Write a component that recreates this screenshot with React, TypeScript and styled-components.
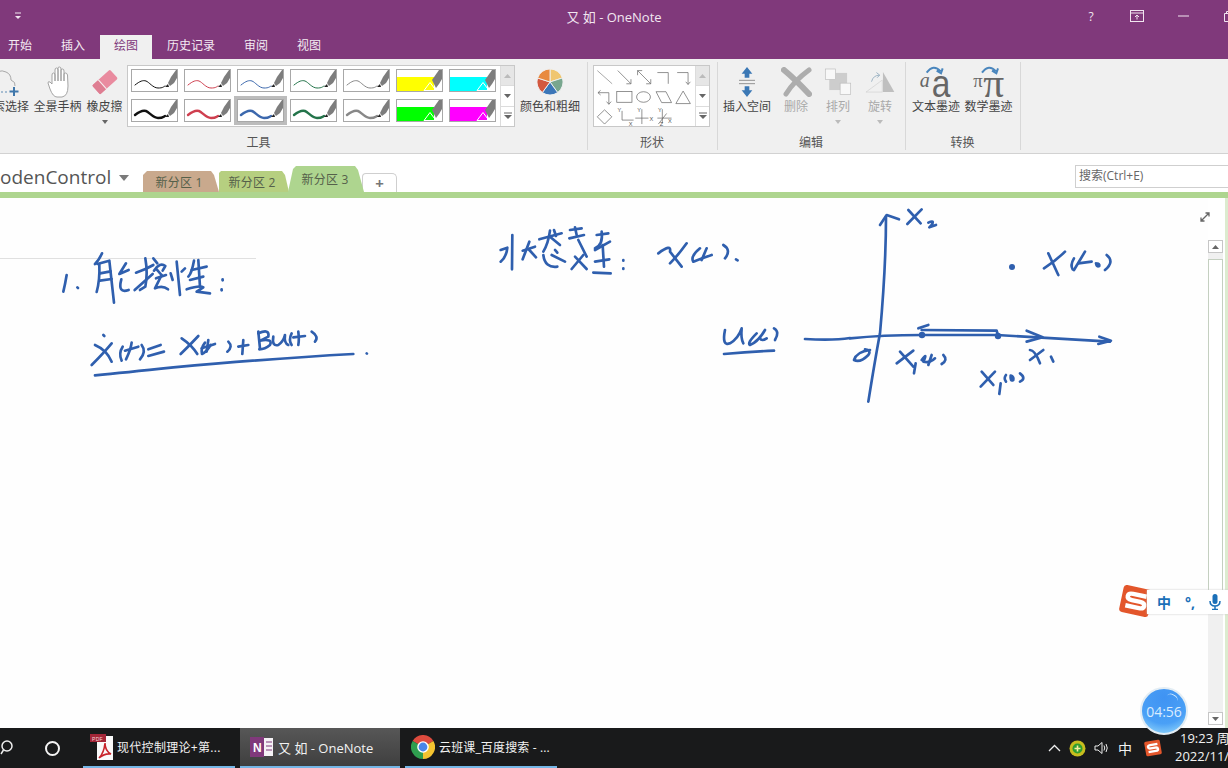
import React from "react";
import styled, { createGlobalStyle } from "styled-components";

const UI = `"Open Sans", "Noto Sans CJK SC", sans-serif`;
const INK = "#2f5fae";

const Global = createGlobalStyle`
  html, body { margin: 0; padding: 0; background: #fff; }
  body { font-family: ${UI}; overflow: hidden; }
  * { box-sizing: border-box; }
`;

const Screen = styled.div`
  position: relative; width: 1228px; height: 768px; overflow: hidden;
  display: flex; flex-direction: column; background: #fff;
`;
const TitleBar = styled.div`
  height: 35px; flex: none; background: #80397b; color: #f1e6f0;
  display: grid; grid-template-columns: 1fr auto 1fr; align-items: center; font-size: 13px;
  padding-bottom: 3px;
`;
const QuickAccess = styled.div`padding-left: 14px; display: flex;`;
const TitleText = styled.div`white-space: pre;`;
const WindowControls = styled.div`display: flex; justify-content: flex-end; margin-right: -24px; height: 100%; align-items: center;`;
const WindowButton = styled.div`width: 46px; display: flex; justify-content: center; align-items: center; font-size: 12px; flex: none;`;

const TabRow = styled.div`height: 24px; flex: none; background: #80397b; display: flex; gap: 1px; margin-left: -6px;`;
const RibbonTab = styled.div<{ $active?: boolean }>`
  padding: 0 14px; font-size: 12px; line-height: 21px; white-space: nowrap;
  color: ${p => (p.$active ? "#80397b" : "#f4ecf3")};
  background: ${p => (p.$active ? "#f0f0f0" : "transparent")};
`;

const Ribbon = styled.div`
  height: 95px; flex: none; background: #f0f0f0; border-bottom: 1px solid #d2d2d2;
  display: flex; margin-left: -69px; align-items: flex-start;
`;
const Group = styled.div<{ $w: number; $pl: number }>`
  width: ${p => p.$w}px; height: 88px; margin-top: 3px; padding-left: ${p => p.$pl}px;
  border-right: 1px solid #d8d8d8; display: flex; flex-direction: column; flex: none;
`;
const GroupBody = styled.div`height: 73px; padding-top: 3px; display: flex; align-items: flex-start;`;
const GroupLabel = styled.div`
  height: 15px; margin-left: -1px; font-size: 12px; line-height: 15px; color: #555; text-align: center;
`;
const GroupLabelWrap = styled.div<{ $pl: number }>`margin-left: ${p => -p.$pl}px;`;
const ToolButton = styled.div<{ $w: number; $off?: boolean }>`
  width: ${p => p.$w}px; flex: none; display: flex; flex-direction: column; align-items: center;
  color: ${p => (p.$off ? "#a9a9a9" : "#444")};
`;
const IconSlot = styled.div`height: 34px; display: flex; align-items: center; justify-content: center; width: 100%;`;
const ToolText = styled.div`font-size: 12px; line-height: 16px; white-space: nowrap;`;
const Caret = styled.div<{ $off?: boolean }>`
  width: 0; height: 0; margin-top: 5px; border: 3px solid transparent; border-bottom: 0;
  border-top: 4px solid ${p => (p.$off ? "#bbb" : "#666")};
`;

const Gallery = styled.div<{ $w: number; $ml?: number }>`
  width: ${p => p.$w}px; height: 62px; flex: none; background: #fff; border: 1px solid #c8c8c8;
  margin-left: ${p => p.$ml ?? 0}px;
  display: flex; justify-content: space-between; overflow: hidden;
`;
const SwatchGrid = styled.div`display: grid; grid-template-columns: repeat(7, 47px); grid-auto-rows: 23px; column-gap: 6px; row-gap: 7px; padding: 3px;`;
const Swatch = styled.div<{ $sel?: boolean }>`
  width: 47px; height: 23px; border: 1px solid #a8a8a8; background: #fff; line-height: 0;
  box-shadow: ${p => (p.$sel ? "0 0 0 3px #bcbcbc" : "none")};
`;
const ScrollStack = styled.div`width: 14px; flex: none; display: flex; flex-direction: column; border-left: 1px solid #dcdcdc;`;
const ScrollCell = styled.div<{ $off?: boolean }>`
  flex: 1; display: flex; align-items: center; justify-content: center; line-height: 0;
  background: ${p => (p.$off ? "#e6e6e6" : "#fff")}; border-bottom: 1px solid #dcdcdc;
  &:last-child { border-bottom: 0; }
`;

const SectionBar = styled.div`height: 38px; flex: none; background: #fff; display: flex; align-items: flex-end; position: relative;`;
const NotebookName = styled.div`width: 143px; height: 38px; flex: none; display: flex; align-items: center; font-size: 19px; color: #555; white-space: nowrap; padding-top: 8px;`;
const NotebookCaret = styled.span`width: 0; height: 0; margin-left: 8px; margin-top: 2px; border: 5px solid transparent; border-bottom: 0; border-top: 6px solid #7a7a7a;`;
const SectionTab = styled.div<{ $c: string; $w: number; $h: number; $ml: number; $pr: number; $clip: string }>`
  width: ${p => p.$w}px; height: ${p => p.$h}px; margin-left: ${p => p.$ml}px; padding-right: ${p => p.$pr}px; background: ${p => p.$c};
  clip-path: ${p => p.$clip}; flex: none; font-size: 12px; letter-spacing: 0.2px; color: #55604a; display: flex; align-items: center; justify-content: center;
`;
const AddTab = styled.div`
  width: 35px; height: 19px; margin-left: -2px; flex: none; border: 1px solid #cfcfcf; border-bottom: 0;
  border-radius: 4px 5px 0 0; color: #777; font-size: 15px; font-weight: 700; display: flex; align-items: center; justify-content: center; line-height: 1;
`;
const SearchBox = styled.div`
  position: absolute; left: 1075px; top: 11px; width: 170px; height: 23px; border: 1px solid #cfcfcf;
  font-size: 12px; color: #666; padding-left: 3px; line-height: 20px;
`;
const GreenRule = styled.div`height: 6px; flex: none; background: #aed58f;`;

const Workspace = styled.div`flex: 1; min-height: 0; display: flex;`;
const Canvas = styled.div`position: relative; width: 1208px; flex: none; background: #fefefe;`;
const TitleRule = styled.div`width: 256px; margin-top: 60px; border-top: 1px solid #e0e0e0;`;
const InkLayer = styled.svg`position: absolute; left: 0; top: 0;`;
const ExpandIcon = styled.div`position: absolute; left: 1199px; top: 13px; line-height: 0;`;
const ScrollColumn = styled.div`width: 15px; flex: none; margin-top: 42px; margin-bottom: 3px; display: flex; flex-direction: column; background: #f0f0f0;`;
const ScrollButton = styled.div`height: 13px; flex: none; background: #fff; border: 1px solid #c6c6c6; display: flex; align-items: center; justify-content: center; line-height: 0;`;
const ScrollTrack = styled.div`flex: 1; padding-top: 6px; display: flex; flex-direction: column;`;
const ScrollThumb = styled.div`height: 354px; background: #fff; border: 1px solid #c4cfc0;`;
const RightGap = styled.div`width: 2px; flex: none; background: #fff;`;
const RightEdge = styled.div`width: 3px; flex: none; background: #dcebcf;`;

const ImeBar = styled.div`
  position: absolute; left: 1147px; top: 590px; width: 90px; height: 24px; background: #fff;
  box-shadow: 0 0 2px #c9c9c9; display: flex; align-items: center; padding-left: 10px; color: #1a6fb8; gap: 14px;
  font-weight: 700; font-size: 14px;
`;
const ImeLogo = styled.div`position: absolute; left: 1119px; top: 584px; line-height: 0;`;
const Timer = styled.div`
  position: absolute; left: 1140px; top: 687px; width: 48px; height: 48px; border-radius: 50%;
  background: radial-gradient(circle at 50% 20%, #3f93f3 0%, #4aa0f6 62%, #86cdf9 88%, #c5e8fb 100%);
  border: 2px solid #e3edf4; color: #d9ecff; font-size: 14px; display: flex; align-items: center; justify-content: center;
  &::before {
    content: ""; position: absolute; right: 8px; top: 5px; width: 12px; height: 8px;
    border-top: 1px solid #cfe8ff; border-radius: 50%; transform: rotate(28deg);
  }
`;

const Taskbar = styled.div`height: 40px; flex: none; background: #191a1b; display: flex; color: #f2f2f2; font-size: 12px; align-items: stretch;`;
const SearchCell = styled.div`width: 27px; flex: none; display: flex; align-items: center; overflow: hidden;`;
const CortanaCell = styled.div`width: 50px; flex: none; display: flex; align-items: center; justify-content: center;`;
const CortanaRing = styled.div`width: 15px; height: 15px; border-radius: 50%; border: 2px solid #f4f4f4;`;
const TaskItem = styled.div<{ $w: number; $ml: number; $pl: number; $gap: number; $fs: number; $ls: number; $active?: boolean }>`
  width: ${p => p.$w}px; margin-left: ${p => p.$ml}px; flex: none; display: flex; align-items: center;
  gap: ${p => p.$gap}px; padding-left: ${p => p.$pl}px; font-size: ${p => p.$fs}px; letter-spacing: ${p => p.$ls}px;
  white-space: pre; border-bottom: 2px solid #74b6e6;
  background: ${p => (p.$active ? "linear-gradient(#575757, #3f3f3f)" : "transparent")};
`;
const Tray = styled.div`margin-left: auto; display: flex; align-items: center; width: 181px; flex: none; overflow: hidden;`;
const TraySlot = styled.div<{ $w: number }>`width: ${p => p.$w}px; flex: none; display: flex; justify-content: center; align-items: center; font-size: 14px;`;
const Clock = styled.div`font-size: 13px; line-height: 18px; white-space: nowrap; padding-left: 11px; margin-top: -2px; width: 66px; flex: none;`;
const ClockTime = styled.div`padding-left: 5px;`;

/* ---------- ribbon icons ---------- */
const Wave = ({ c, w }: { c: string; w: number }) => (
  <path d="M3 15C8 11 11 10 14 11S21 18 26 18S31 17 33 16" fill="none" stroke={c} strokeWidth={w} strokeLinecap="round" />
);
const PenIcon = ({ c, w }: { c: string; w: number }) => (
  <svg width="45" height="21">
    <Wave c={c} w={w} />
    <path d="M36 13L39 7L44 0L45 0V8L42 13L38 16Z" fill="#7d7d7d" />
    <path d="M33 17L36 14L37 17Z" fill="#222" />
  </svg>
);
const MarkerIcon = ({ c }: { c: string }) => (
  <svg width="45" height="21">
    <rect x="0" y="7" width="37" height="14" fill={c} />
    <path d="M35 10L42 0H45V9L42 14L39 18Z" fill="#7d7d7d" />
    <path d="M27 20.500L33 12.500L39 20.500Z" fill="none" stroke="#fff" strokeWidth="1" />
  </svg>
);
const TriUp = ({ c = "#888" }: { c?: string }) => <svg width="7" height="4"><path d="M0 4L3.5 0L7 4Z" fill={c} /></svg>;
const TriDown = ({ c = "#666" }: { c?: string }) => <svg width="7" height="4"><path d="M0 0L3.5 4L7 0Z" fill={c} /></svg>;
const MoreTri = () => (
  <svg width="8" height="8"><path d="M0 1H8" stroke="#666" /><path d="M0 3L4 7L8 3Z" fill="#666" /></svg>
);
const Scrolls = () => (
  <ScrollStack>
    <ScrollCell $off><TriUp c="#bbb" /></ScrollCell>
    <ScrollCell><TriDown /></ScrollCell>
    <ScrollCell><MoreTri /></ScrollCell>
  </ScrollStack>
);

const LassoIcon = () => (
  <svg width="32" height="33">
    <path d="M3 12Q9 2 17 6Q22 8 22 14Q27 16 26 20" fill="none" stroke="#a8a8a8" />
    <path d="M0 26H20" stroke="#5c8ab3" strokeDasharray="2 2" />
    <path d="M25 21V30M20.5 25.5H29.5" stroke="#3f77ab" strokeWidth="2" />
  </svg>
);
const HandIcon = () => (
  <svg width="22" height="32" viewBox="0 0 22 32">
    <path d="M5 18V9Q5 7 6.500 7Q8 7 8 9V15V4Q8 2 9.500 2Q11 2 11 4V15V2Q11 1 12.500 1Q14 1 14 3V15V4Q14 3 15.500 3Q17 3 17 5V15V8Q17 7 18.500 7Q20 7 20.500 9L21 20Q21 30 15 31H10Q6 31 3 23L1 17Q1 15 3 16Z" fill="#fff" stroke="#9a9a9a" strokeWidth="0.9" />
  </svg>
);
const EraserIcon = () => (
  <svg width="26" height="26">
    <g transform="rotate(-42 13 13)">
      <rect x="1" y="7" width="24" height="12" rx="1.500" fill="#e98b9f" />
      <rect x="1" y="7" width="8" height="12" rx="1" fill="#de7e92" />
      <rect x="9" y="7" width="1" height="12" fill="#f5f0f0" />
    </g>
  </svg>
);
const PieIcon = () => (
  <svg width="28" height="28" viewBox="0 0 30 30">
    <path d="M15 15L15 1A14 14 0 0 1 28.300 10.700Z" fill="#f0c670" stroke="#f0f0f0" />
    <path d="M15 15L28.300 10.700A14 14 0 0 1 23.200 26.300Z" fill="#78a68e" stroke="#f0f0f0" />
    <path d="M15 15L23.200 26.300A14 14 0 0 1 6.800 26.300Z" fill="#3b76b8" stroke="#f0f0f0" />
    <path d="M15 15L6.800 26.300A14 14 0 0 1 1.700 10.700Z" fill="#d3583f" stroke="#f0f0f0" />
    <path d="M15 15L1.700 10.700A14 14 0 0 1 15 1Z" fill="#e88a3f" stroke="#f0f0f0" />
  </svg>
);
const ShapesIcon = () => (
  <svg width="102" height="60" viewBox="220 15 306 180">
    <g fill="none" stroke="#6a6a6a" strokeWidth="2.200">
      <path d="M230 28L275 68" stroke="#888" />
      <path d="M292 28L332 68M332 54V68H318" />
      <path d="M352 28L392 68M352 42V28H366M392 54V68H378" />
      <path d="M412 34H445V68" />
      <path d="M472 34H505V70M498 62L505 70L512 62" />
      <path d="M232 95H265V130M240 88L232 95L240 102M258 122L265 130L272 122" />
      <rect x="289" y="91" width="46" height="33" />
      <ellipse cx="370" cy="108" rx="21" ry="16" />
      <path d="M408 92H438L455 125H425Z" />
      <path d="M468 128L490 90L512 128Z" />
      <path d="M230 168L252 147L274 168L252 190Z" />
      <path d="M305 150V178H340" />
      <path d="M365 145V190M345 172H385" />
      <path d="M427 145V188M412 172H455M415 190L440 158" />
    </g>
    <g fill="#555" fontSize="17" fontFamily="Liberation Sans, sans-serif">
      <text x="291" y="155">Y</text>
      <text x="325" y="196">X</text>
      <text x="351" y="155">Y</text>
      <text x="388" y="182">X</text>
      <text x="414" y="155">Y</text>
      <text x="419" y="196">Z</text>
      <text x="444" y="186">X</text>
    </g>
  </svg>
);
const InsertSpaceIcon = () => (
  <svg width="18" height="32" viewBox="655 15 54 96">
    <path d="M682 18L698 38H689V50H675V38H666Z" fill="#3b78b5" />
    <path d="M682 108L698 88H689V76H675V88H666Z" fill="#3b78b5" />
    <path d="M658 58H706M658 68H706" stroke="#808080" strokeWidth="2.500" />
  </svg>
);
const DeleteIcon = () => (
  <svg width="31" height="30">
    <path d="M3 3Q15 13 28 27" fill="none" stroke="#adadad" strokeWidth="6" strokeLinecap="round" />
    <path d="M28 3Q13 14 5 27" fill="none" stroke="#adadad" strokeWidth="5" strokeLinecap="round" />
  </svg>
);
const ArrangeIcon = () => (
  <svg width="28" height="28" viewBox="130 20 85 85">
    <rect x="146" y="35" width="54" height="52" fill="#cdcdcd" />
    <rect x="134" y="23" width="31" height="32" fill="#f8f8f8" stroke="#bdbdbd" strokeWidth="2" />
    <rect x="179" y="66" width="32" height="34" fill="#f8f8f8" stroke="#bdbdbd" strokeWidth="2" />
  </svg>
);
const RotateIcon = () => (
  <svg width="30" height="26" viewBox="255 25 92 72">
    <path d="M310 30L345 92H310Z" fill="#bfbfbf" />
    <path d="M258 92L308 55V92Z" fill="none" stroke="#cfcfcf" strokeWidth="2" />
    <path d="M275 60Q280 40 300 40M290 32L300 40L292 48" fill="none" stroke="#9db3c4" strokeWidth="3" />
  </svg>
);
const InkArc = ({ x }: { x: number }) => (
  <path d={`M${x} 36Q${x + 20} 8 ${x + 42} 32M${x + 30} 30L${x + 43} 38L${x + 48} 23`} fill="none" stroke="#4a86bd" strokeWidth="6" />
);
const InkTextIcon = () => (
  <svg width="36" height="36" viewBox="420 10 108 108" overflow="visible">
    <text x="425" y="80" fontSize="60" fontStyle="italic" fill="#666" fontFamily="Liberation Serif, serif">a</text>
    <text x="461" y="110" fontSize="118" fill="#666" fontFamily="Liberation Sans, sans-serif" textLength="56" lengthAdjust="spacingAndGlyphs">a</text>
    <InkArc x={446} />
  </svg>
);
const InkMathIcon = () => (
  <svg width="36" height="36" viewBox="573 10 108 108" overflow="visible">
    <text x="580" y="78" fontSize="56" fill="#666" fontFamily="Liberation Serif, serif">π</text>
    <text x="610" y="110" fontSize="124" fill="#666" fontFamily="Liberation Serif, serif">π</text>
    <InkArc x={606} />
  </svg>
);
const SogouMark = ({ size, r }: { size: number; r: number }) => (
  <svg width={size} height={size} viewBox="0 0 32 32">
    <g transform={`rotate(${r} 16 16)`}>
      <rect x="2" y="3" width="28" height="26" rx="3" fill="#e3562b" />
      <path d="M25 10H12Q7.500 10 7.500 13Q7.500 16 12 16H20Q24.500 16 24.500 19Q24.500 22 20 22H7" fill="none" stroke="#fff" strokeWidth="4.200" />
    </g>
  </svg>
);
const PdfIcon = () => (
  <svg width="24" height="28" viewBox="0 0 24 28">
    <path d="M7 3H23V27H7Z" fill="#fafafa" />
    <rect x="0" y="1" width="16" height="8" fill="#a32638" />
    <text x="2" y="7.500" fontSize="5" fill="#f5d8d8" fontFamily="Liberation Sans, sans-serif">PDF</text>
    <path d="M9 25Q14 20 15 10Q15 18 21 21Q15 20 9 25Z" fill="none" stroke="#c8242b" strokeWidth="1.600" />
  </svg>
);
const OneNoteIcon = () => (
  <svg width="23" height="24" viewBox="0 0 23 24">
    <rect x="0" y="2" width="14" height="20" fill="#80397b" />
    <rect x="14" y="3" width="9" height="18" fill="#f5f2f5" />
    <path d="M16 7H22M16 11H22M16 15H22" stroke="#80397b" />
    <text x="3" y="17" fontSize="12" fontWeight="700" fill="#fff" fontFamily="Liberation Sans, sans-serif">N</text>
  </svg>
);
const ChromeIcon = () => (
  <svg width="24" height="24" viewBox="0 0 24 24">
    <path d="M12 12L1.600 6A12 12 0 0 1 22.400 6Z" fill="#dd4b3e" />
    <path d="M12 12L22.400 6A12 12 0 0 1 12 24Z" fill="#f4c430" />
    <path d="M12 12L12 24A12 12 0 0 1 1.600 6Z" fill="#2f9e4f" />
    <circle cx="12" cy="12" r="5.800" fill="#fff" />
    <circle cx="12" cy="12" r="4.400" fill="#4a86e8" />
  </svg>
);

/* ---------- handwritten ink, traced from the reference at 3x ---------- */
const inkGroups: { x: number; y: number; d: string[] }[] = [
  {
    x: 40, y: 230,
    d: [
      "M80 135Q75 165 70 185", "M112 172l2 2",
      "M186 70Q176 92 165 102", "M172 102L208 92L222 218", "M178 104Q180 150 170 186", "M180 130L212 124", "M180 152L215 147",
      "M258 100L238 132L266 120", "M244 148Q232 192 266 180",
      "M288 128Q318 118 340 105", "M316 85Q324 130 316 170L300 180", "M284 180L338 132", "M340 85L352 100", "M342 122Q360 95 376 108L368 122", "M350 118L362 132", "M348 145L378 135", "M365 135L345 175Q368 165 384 178",
      "M410 95L420 195", "M392 130L398 150", "M425 125L435 115", "M462 92Q455 130 445 140", "M455 120L500 110", "M475 90L480 170", "M450 150L490 140", "M440 178Q480 165 490 172L470 185L510 190",
      "M548 148l0 3", "M545 178l0 3",
      "M165 345Q200 360 215 395", "M215 340Q190 370 155 405", "M190 315l3 3",
      "M248 350Q235 370 245 392", "M275 338Q272 360 258 388", "M255 362L295 350", "M305 345Q320 365 300 388",
      "M325 358L362 345", "M325 378L372 365",
      "M425 325Q455 345 472 372", "M475 318Q450 345 422 372",
      "M495 338Q482 355 486 372Q500 365 512 345", "M505 330L500 365", "M485 355L525 342", "M565 335Q580 350 562 365",
      "M595 350L625 345", "M610 330L607 372",
      "M655 305L660 355", "M655 310Q690 295 685 320Q665 330 660 332Q700 325 690 345Q675 358 658 358",
      "M700 320Q695 350 715 345Q730 335 735 315Q732 340 745 345",
      "M755 310Q745 330 755 345", "M775 305Q778 330 775 345", "M760 322L795 318", "M815 305Q838 320 825 335",
      "M165 436Q250 428 400 412Q700 385 940 372", "M980 370l1 1",
    ],
  },
  {
    x: 480, y: 200,
    d: [
      "M62 150L82 143Q80 170 62 185", "M97 105L96 208",
      "M128 152L165 140", "M148 125L128 178", "M148 150L168 172",
      "M178 118L245 100", "M210 92Q205 130 190 155", "M210 110L240 135", "M222 90L228 108",
      "M190 165Q195 205 232 200", "M215 165L255 185", "M225 150L232 158",
      "M270 90L305 85", "M268 115L312 105", "M285 82L290 105", "M295 120L320 170", "M310 165L275 207", "M285 170L320 207",
      "M350 105L385 100", "M365 95Q370 135 345 145", "M345 150L390 125", "M368 135L372 200", "M345 185L388 178", "M340 218L392 220",
      "M430 180l0 2", "M430 205l0 2",
      "M535 160Q575 130 570 155L605 200", "M620 130Q595 165 570 190",
      "M660 145Q630 170 640 185Q665 175 695 165", "M680 145L665 180", "M730 135Q755 150 735 175", "M768 178l5 3",
    ],
  },
  {
    x: 850, y: 200,
    d: [
      "M55 605Q75 480 90 400Q108 200 108 50", "M90 75L110 45L147 58",
      "M0 415Q100 405 215 405L440 405Q600 415 780 425", "M530 392L578 412L530 425", "M748 410L783 422L745 432",
      "M205 385L235 375M215 390L440 392L445 410",
      "M175 30L212 70", "M215 28L172 72", "M235 68Q255 58 245 75L238 82L258 75",
      "M582 205Q620 180 645 155", "M595 160L625 225", "M672 175Q660 195 668 208", "M705 155L672 210", "M685 190L725 185",
      "M738 190Q750 190 748 198Q740 202 738 190", "M770 165Q795 185 765 210",
      "M60 450Q20 455 12 480Q30 490 55 465Q65 450 45 448",
      "M150 455L190 500", "M190 452L140 490", "M197 490L192 520", "M215 480Q235 455 220 485Q240 490 255 475", "M245 465L235 495", "M280 465Q295 480 275 492",
      "M540 450Q555 450 570 490", "M580 450L540 480", "M603 470L610 485",
      "M395 515L430 555", "M435 515L392 560", "M452 550L448 582", "M468 525Q460 535 468 545", "M482 527Q492 530 490 540Q480 545 482 527", "M510 520Q530 535 510 545",
    ],
  },
  {
    x: 700, y: 310,
    d: [
      "M75 60Q65 110 90 100Q115 85 125 55Q122 85 130 100", "M170 70Q140 100 150 105Q175 95 195 60", "M180 85Q185 95 200 85",
      "M222 55Q240 65 225 90", "M72 132Q150 125 222 122", "M315 87Q400 92 450 84",
    ],
  },
];
const inkDots = [
  { cx: 922, cy: 335, r: 3.2 },
  { cx: 998, cy: 336, r: 3.2 },
  { cx: 1012, cy: 267, r: 3 },
];

const InkDrawing = () => (
  <InkLayer width="1208" height="530" viewBox="0 198 1208 530">
    <g fill="none" stroke={INK} strokeLinecap="round" strokeLinejoin="round">
      {inkGroups.map((g, i) => (
        <g key={i} transform={`translate(${g.x} ${g.y}) scale(0.3333)`} strokeWidth="8">
          {g.d.map((d, j) => <path key={j} d={d} />)}
        </g>
      ))}
    </g>
    <g fill={INK}>
      {inkDots.map(d => <circle key={d.cx} {...d} />)}
    </g>
  </InkLayer>
);

const penColors = ["#111", "#cf3f4f", "#3c68ad", "#23744a", "#888"];
const markerA = ["#ffff00", "#00ffff"];
const markerB = ["#00ff00", "#ff00ff"];

export default function App() {
  return (
    <Screen>
      <Global />
      <TitleBar>
        <QuickAccess>
          <svg width="8" height="8"><path d="M1 1H7" stroke="#f1e6f0" /><path d="M1 4H7L4 7Z" fill="#f1e6f0" /></svg>
        </QuickAccess>
        <TitleText>又 如 - OneNote</TitleText>
        <WindowControls>
          <WindowButton>?</WindowButton>
          <WindowButton>
            <svg width="14" height="12"><rect x="0.500" y="0.500" width="13" height="11" fill="none" stroke="#f1e6f0" /><path d="M0 3H14" stroke="#f1e6f0" /><path d="M7 9.500V5M5 7L7 5L9 7" fill="none" stroke="#f1e6f0" /></svg>
          </WindowButton>
          <WindowButton>
            <svg width="11" height="2"><path d="M0 1H11" stroke="#f1e6f0" /></svg>
          </WindowButton>
          <WindowButton>
            <svg width="11" height="11"><path d="M2.500 2.500V.5H10.500V8.500H8.500M.5 2.500H8.500V10.500H.5Z" fill="none" stroke="#f1e6f0" /></svg>
          </WindowButton>
        </WindowControls>
      </TitleBar>

      <TabRow>
        <RibbonTab>开始</RibbonTab>
        <RibbonTab>插入</RibbonTab>
        <RibbonTab $active>绘图</RibbonTab>
        <RibbonTab>历史记录</RibbonTab>
        <RibbonTab>审阅</RibbonTab>
        <RibbonTab>视图</RibbonTab>
      </TabRow>

      <Ribbon>
        <Group $w={657} $pl={47}>
          <GroupBody>
            <ToolButton $w={54}><IconSlot><LassoIcon /></IconSlot><ToolText>套索选择</ToolText></ToolButton>
            <ToolButton $w={51}><IconSlot><HandIcon /></IconSlot><ToolText>全景手柄</ToolText></ToolButton>
            <ToolButton $w={43}><IconSlot><EraserIcon /></IconSlot><ToolText>橡皮擦</ToolText><Caret /></ToolButton>
            <Gallery $w={388} $ml={1}>
              <SwatchGrid>
                {penColors.map(c => <Swatch key={c}><PenIcon c={c} w={1} /></Swatch>)}
                {markerA.map(c => <Swatch key={c}><MarkerIcon c={c} /></Swatch>)}
                {penColors.map((c, i) => <Swatch key={c} $sel={i === 2}><PenIcon c={c} w={2.4} /></Swatch>)}
                {markerB.map(c => <Swatch key={c}><MarkerIcon c={c} /></Swatch>)}
              </SwatchGrid>
              <Scrolls />
            </Gallery>
            <ToolButton $w={70}><IconSlot><PieIcon /></IconSlot><ToolText>颜色和粗细</ToolText></ToolButton>
          </GroupBody>
          <GroupLabelWrap $pl={47}><GroupLabel>工具</GroupLabel></GroupLabelWrap>
        </Group>

        <Group $w={130} $pl={5}>
          <GroupBody>
            <Gallery $w={117}>
              <ShapesIcon />
              <Scrolls />
            </Gallery>
          </GroupBody>
          <GroupLabelWrap $pl={5}><GroupLabel>形状</GroupLabel></GroupLabelWrap>
        </Group>

        <Group $w={188} $pl={0}>
          <GroupBody>
            <ToolButton $w={58}><IconSlot><InsertSpaceIcon /></IconSlot><ToolText>插入空间</ToolText></ToolButton>
            <ToolButton $w={40} $off><IconSlot><DeleteIcon /></IconSlot><ToolText>删除</ToolText></ToolButton>
            <ToolButton $w={44} $off><IconSlot><ArrangeIcon /></IconSlot><ToolText>排列</ToolText><Caret $off /></ToolButton>
            <ToolButton $w={40} $off><IconSlot><RotateIcon /></IconSlot><ToolText>旋转</ToolText><Caret $off /></ToolButton>
          </GroupBody>
          <GroupLabelWrap $pl={0}><GroupLabel>编辑</GroupLabel></GroupLabelWrap>
        </Group>

        <Group $w={115} $pl={4}>
          <GroupBody>
            <ToolButton $w={52}><IconSlot><InkTextIcon /></IconSlot><ToolText>文本墨迹</ToolText></ToolButton>
            <ToolButton $w={53}><IconSlot><InkMathIcon /></IconSlot><ToolText>数学墨迹</ToolText></ToolButton>
          </GroupBody>
          <GroupLabelWrap $pl={4}><GroupLabel>转换</GroupLabel></GroupLabelWrap>
        </Group>
      </Ribbon>

      <SectionBar>
        <NotebookName>odenControl<NotebookCaret /></NotebookName>
        <SectionTab $c="#c9a98d" $w={76} $h={21} $ml={0} $pr={4} $clip="polygon(0 100%, 0 4px, 4px 0, calc(100% - 8px) 0, calc(100% - 5px) 4px, 100% 100%)">新分区 1</SectionTab>
        <SectionTab $c="#b6cf80" $w={70} $h={21} $ml={0} $pr={4} $clip="polygon(0 100%, 0 2px, 2px 0, calc(100% - 7px) 0, calc(100% - 4px) 4px, 100% 100%)">新分区 2</SectionTab>
        <SectionTab $c="#aed58f" $w={76} $h={26} $ml={-1} $pr={2} $clip="polygon(0 100%, 5px 3px, 8px 0, calc(100% - 9px) 0, calc(100% - 6px) 4px, 100% 100%)">新分区 3</SectionTab>
        <AddTab>+</AddTab>
        <SearchBox>搜索(Ctrl+E)</SearchBox>
      </SectionBar>
      <GreenRule />

      <Workspace>
        <Canvas>
          <TitleRule />
          <InkDrawing />
          <ExpandIcon>
            <svg width="12" height="12"><path d="M2 10L10 2M6.500 2H10V5.500M2 6.500V10H5.500" fill="none" stroke="#666" strokeWidth="1.300" /></svg>
          </ExpandIcon>
        </Canvas>
        <ScrollColumn>
          <ScrollButton><TriUp c="#666" /></ScrollButton>
          <ScrollTrack><ScrollThumb /></ScrollTrack>
          <ScrollButton><TriDown /></ScrollButton>
        </ScrollColumn>
        <RightGap />
        <RightEdge />
      </Workspace>

      <Taskbar>
        <SearchCell>
          <svg width="13" height="18"><circle cx="7" cy="7" r="5" fill="none" stroke="#eee" strokeWidth="1.500" /><path d="M3.500 11L1 15" stroke="#eee" strokeWidth="1.500" /></svg>
        </SearchCell>
        <CortanaCell><CortanaRing /></CortanaCell>
        <TaskItem $w={152} $ml={6} $pl={7} $gap={3} $fs={12} $ls={0.3}><PdfIcon />现代控制理论+第...</TaskItem>
        <TaskItem $w={160} $ml={5} $pl={10} $gap={5} $fs={13} $ls={0} $active><OneNoteIcon />又 如 - OneNote</TaskItem>
        <TaskItem $w={152} $ml={5} $pl={6} $gap={4} $fs={12} $ls={0.15}><ChromeIcon />云班课_百度搜索 - ...</TaskItem>
        <Tray>
          <TraySlot $w={14}><svg width="13" height="8"><path d="M1 7L6.500 1.500L12 7" fill="none" stroke="#eee" strokeWidth="1.300" /></svg></TraySlot>
          <TraySlot $w={33}>
            <svg width="17" height="17"><circle cx="8.500" cy="8.500" r="8" fill="#c8bd1e" /><circle cx="8.500" cy="8.500" r="5" fill="#2f9e2f" /><path d="M8.500 5.500V11.500M5.500 8.500H11.500" stroke="#f6f0a0" strokeWidth="1.600" /></svg>
          </TraySlot>
          <TraySlot $w={14}>
            <svg width="16" height="14"><path d="M1 5H4L8 1.500V12.500L4 9H1Z" fill="none" stroke="#eee" /><path d="M10 4.500Q11.500 7 10 9.500M12 3Q14.500 7 12 11" fill="none" stroke="#eee" /></svg>
          </TraySlot>
          <TraySlot $w={34}>中</TraySlot>
          <TraySlot $w={22}><SogouMark size={18} r={-10} /></TraySlot>
          <Clock><ClockTime>19:23 周</ClockTime>2022/11/</Clock>
        </Tray>
      </Taskbar>

      <ImeLogo><SogouMark size={34} r={12} /></ImeLogo>
      <ImeBar>
        <span>中</span>
        <span>°,</span>
        <svg width="12" height="16"><rect x="3.500" y="0" width="5" height="10" rx="2.500" fill="#1a6fb8" /><path d="M1 7Q1 12 6 12Q11 12 11 7M6 12V15M3 15.500H9" fill="none" stroke="#1a6fb8" strokeWidth="1.500" /></svg>
      </ImeBar>
      <Timer>04:56</Timer>
    </Screen>
  );
}
